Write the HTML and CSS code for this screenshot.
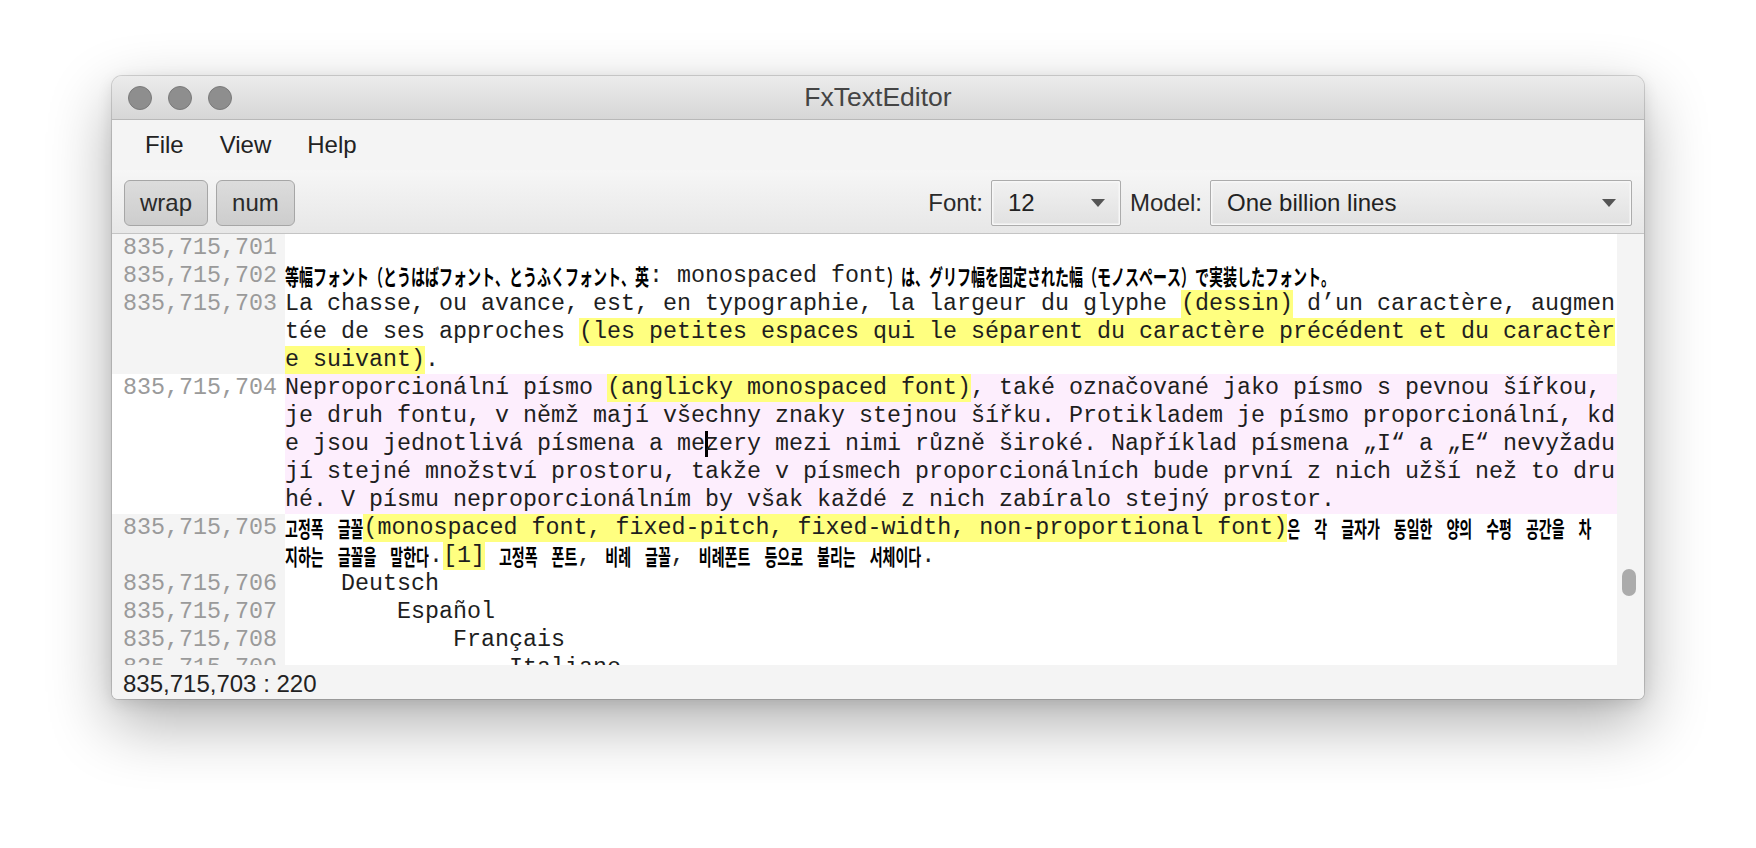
FILE: index.html
```html
<!DOCTYPE html>
<html lang="en">
<head>
<meta charset="utf-8">
<title>FxTextEditor</title>
<link rel="stylesheet" href="styles.css">
</head>
<body>
<div class="window">
  <div class="titlebar">
    <div class="lights"><span class="light"></span><span class="light"></span><span class="light"></span></div>
    <div class="title">FxTextEditor</div>
    <div></div>
  </div>
  <div class="menubar">
    <span class="menu-item">File</span>
    <span class="menu-item">View</span>
    <span class="menu-item">Help</span>
  </div>
  <div class="toolbar">
    <button class="tbtn">wrap</button>
    <button class="tbtn">num</button>
    <div class="spacer"></div>
    <span class="lbl">Font:</span>
    <div class="combo combo-font"><span>12</span><span class="arrow"></span></div>
    <span class="lbl">Model:</span>
    <div class="combo combo-model"><span>One billion lines</span><span class="arrow"></span></div>
  </div>
  <div class="main">
    <div class="editor">
      <div class="ln"><div class="gut">835,715,701</div><div class="txt"><div class="vl"></div></div></div>
      <div class="ln"><div class="gut">835,715,702</div><div class="txt"><div class="vl"><span class="j">等幅フォント（とうはばフォント、とうふくフォント、英</span>: monospaced font<span class="j">）は、グリフ幅を固定された幅（モノスペース）で実装したフォント。</span></div></div></div>
      <div class="ln"><div class="gut">835,715,703</div><div class="txt"><div class="vl">La chasse, ou avance, est, en typographie, la largeur du glyphe <span class="hl">(dessin)</span> d’un caractère, augmen</div><div class="vl">tée de ses approches <span class="hl">(les petites espaces qui le séparent du caractère précédent et du caractèr</span></div><div class="vl"><span class="hl">e suivant)</span>.</div></div></div>
      <div class="ln cur"><div class="gut">835,715,704</div><div class="txt"><div class="vl">Neproporcionální písmo <span class="hl">(anglicky monospaced font)</span>, také označované jako písmo s pevnou šířkou, </div><div class="vl">je druh fontu, v němž mají všechny znaky stejnou šířku. Protikladem je písmo proporcionální, kd</div><div class="vl">e jsou jednotlivá písmena a me<span class="caret"></span>zery mezi nimi různě široké. Například písmena „I“ a „E“ nevyžadu</div><div class="vl">jí stejné množství prostoru, takže v písmech proporcionálních bude první z nich užší než to dru</div><div class="vl">hé. V písmu neproporcionálním by však každé z nich zabíralo stejný prostor.</div></div></div>
      <div class="ln"><div class="gut">835,715,705</div><div class="txt"><div class="vl"><span class="k">고정폭</span> <span class="k">글꼴</span><span class="hl">(monospaced font, fixed-pitch, fixed-width, non-proportional font)</span><span class="k">은</span> <span class="k">각</span> <span class="k">글자가</span> <span class="k">동일한</span> <span class="k">양의</span> <span class="k">수평</span> <span class="k">공간을</span> <span class="k">차</span></div><div class="vl"><span class="k">지하는</span> <span class="k">글꼴을</span> <span class="k">말한다</span>.<span class="hl">[1]</span> <span class="k">고정폭</span> <span class="k">폰트</span>, <span class="k">비례</span> <span class="k">글꼴</span>, <span class="k">비례폰트</span> <span class="k">등으로</span> <span class="k">불리는</span> <span class="k">서체이다</span>.</div></div></div>
      <div class="ln"><div class="gut">835,715,706</div><div class="txt"><div class="vl">    Deutsch</div></div></div>
      <div class="ln"><div class="gut">835,715,707</div><div class="txt"><div class="vl">        Español</div></div></div>
      <div class="ln"><div class="gut">835,715,708</div><div class="txt"><div class="vl">            Français</div></div></div>
      <div class="ln"><div class="gut">835,715,709</div><div class="txt"><div class="vl">                Italiano</div></div></div>
    </div>
    <div class="vscroll"><div class="thumb"></div></div>
  </div>
  <div class="status">835,715,703 : 220</div>
</div>
</body>
</html>
```

FILE: styles.css
```css
html, body {
  margin: 0;
}
body {
  background: #ffffff;
  height: 848px;
  box-sizing: border-box;
  padding: 76px 0 0 112px;
  overflow: hidden;
  font-family: "Liberation Sans", Arial, sans-serif;
}
.window {
  width: 1532px;
  height: 623px;
  border-radius: 10px 10px 6px 6px;
  overflow: hidden;
  display: flex;
  flex-direction: column;
  background: #f4f4f4;
  box-shadow: 0 0 0 1px rgba(0,0,0,0.14), 0 24px 64px rgba(0,0,0,0.32), 0 4px 16px rgba(0,0,0,0.10);
}
.titlebar {
  height: 44px;
  box-sizing: border-box;
  border-bottom: 1px solid #b8b8b8;
  background: linear-gradient(#ececec, #d6d6d6);
  display: grid;
  grid-template-columns: 1fr auto 1fr;
  align-items: center;
}
.lights {
  display: flex;
  gap: 16px;
  padding-left: 16px;
}
.light {
  width: 24px;
  height: 24px;
  box-sizing: border-box;
  border-radius: 50%;
  background: #8e8e8e;
  border: 1px solid #7a7a7a;
}
.title {
  font-size: 26.5px;
  color: #444;
}
.menubar {
  height: 50px;
  display: flex;
  align-items: center;
  padding-left: 15px;
  background: #f4f4f4;
}
.menu-item {
  padding: 0 18px;
  font-size: 24px;
  color: #222;
}
.toolbar {
  height: 64px;
  box-sizing: border-box;
  border-bottom: 1px solid #c4c4c4;
  background: linear-gradient(#f6f6f6, #e7e7e7);
  display: flex;
  align-items: flex-start;
  padding: 10px 12px 0 12px;
}
.tbtn {
  height: 46px;
  box-sizing: border-box;
  padding: 0 15px;
  margin: 0 8px 0 0;
  border: 1.5px solid #a6a6a6;
  border-radius: 6px;
  background: linear-gradient(#dcdcdc, #cdcdcd);
  font-family: "Liberation Sans", Arial, sans-serif;
  font-size: 24px;
  color: #2a2a2a;
}
.spacer {
  flex: 1;
}
.lbl {
  font-size: 24px;
  color: #2a2a2a;
  line-height: 46px;
  margin-right: 8px;
}
.combo {
  height: 46px;
  box-sizing: border-box;
  display: flex;
  align-items: center;
  justify-content: space-between;
  padding: 0 15px 0 16px;
  border: 1.5px solid #acacac;
  border-radius: 2px;
  box-shadow: inset 0 0 0 1.5px #f7f7f7;
  background: linear-gradient(#f1f1f1, #e1e1e1);
  font-size: 24px;
  color: #222;
}
.combo-font {
  width: 130px;
  margin-right: 9px;
}
.combo-model {
  width: 422px;
}
.arrow {
  width: 0;
  height: 0;
  border-left: 7px solid transparent;
  border-right: 7px solid transparent;
  border-top: 8px solid #555;
}
.main {
  flex: 1;
  display: flex;
  min-height: 0;
}
.editor {
  width: 1505px;
  overflow: hidden;
  background: #fff;
  font-family: "Liberation Mono", "Courier New", monospace;
  font-size: 23.33px;
  line-height: 28px;
  color: #1e1e1e;
}
.ln {
  display: flex;
}
.gut {
  width: 173px;
  flex: none;
  box-sizing: border-box;
  padding-left: 11px;
  color: #9a9a9a;
  background: #f4f4f4;
}
.txt {
  flex: 1;
  background: #fff;
}
.ln.cur .gut {
  background: #fff;
}
.ln.cur .txt {
  background: #fdeefd;
}
.vl {
  height: 28px;
  white-space: pre;
}
.hl {
  display: inline-block;
  vertical-align: top;
  height: 28px;
  background: #ffff80;
}
.j, .k {
  display: inline-block;
  font-size: 14px;
  font-weight: 700;
  line-height: 14px;
  font-kerning: none;
  transform: scaleY(1.58);
  transform-origin: 50% 58%;
  color: #000;
}
.j {
  font-family: "Noto Sans CJK JP", sans-serif;
}
.k {
  font-family: "Noto Sans CJK KR", sans-serif;
}
.caret {
  display: inline-block;
  width: 3px;
  height: 26px;
  margin-right: -3px;
  vertical-align: top;
  margin-top: 1px;
  background: #000;
}
.vscroll {
  flex: 1;
  background: #f4f4f4;
  padding-top: 335px;
  padding-left: 5px;
}
.thumb {
  width: 14px;
  height: 27px;
  border-radius: 7px;
  background: #ababab;
}
.status {
  height: 34px;
  box-sizing: border-box;
  padding: 5px 0 0 11px;
  font-size: 24px;
  color: #222;
  background: #f4f4f4;
}
```
